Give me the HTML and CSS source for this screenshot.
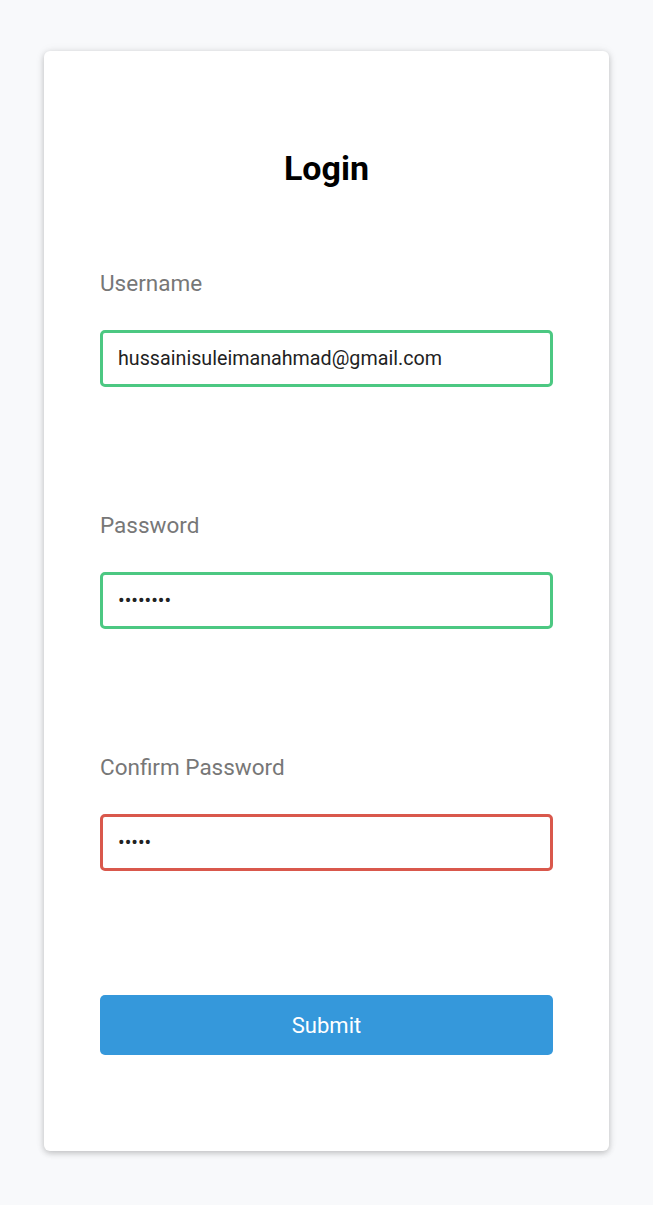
FILE: index.html
```html
<!DOCTYPE html>
<html lang="en">
<head>
<meta charset="utf-8">
<title>Login</title>
<link rel="stylesheet" href="styles.css">
</head>
<body>
<main class="page">
  <form class="card">
    <h1 class="title">Login</h1>
    <div class="field">
      <label class="label" for="u">Username</label>
      <input class="input valid" id="u" type="text" value="hussainisuleimanahmad@gmail.com">
    </div>
    <div class="field">
      <label class="label" for="p">Password</label>
      <input class="input valid" id="p" type="password" value="12345678">
    </div>
    <div class="field">
      <label class="label" for="c">Confirm Password</label>
      <input class="input invalid" id="c" type="password" value="12345">
    </div>
    <button class="submit" type="button">Submit</button>
  </form>
</main>
</body>
</html>
```
FILE: styles.css
```css
html, body {
  margin: 0;
  padding: 0;
  background: #f8f9fb;
  font-family: Roboto, "Liberation Sans", sans-serif;
}
.page {
  padding: 51px 44px 54px 44px;
}
.card {
  background: #fff;
  border-radius: 6px;
  box-shadow: 0 2px 6px rgba(0, 0, 0, 0.22), 0 0 12px rgba(0, 0, 0, 0.05);
  padding: 97px 56px 96px 56px;
  display: flex;
  flex-direction: column;
  height: 1100px;
  box-sizing: border-box;
}
.title {
  margin: 0 0 83px 0;
  text-align: center;
  font-size: 34px;
  line-height: 40px;
  font-weight: 700;
  color: #000;
}
.field {
  display: flex;
  flex-direction: column;
  margin-bottom: 126px;
}
.field:nth-of-type(3) {
  margin-bottom: 124px;
}
.label {
  font-size: 22.5px;
  line-height: 24px;
  color: #777;
  margin-bottom: 35px;
}
.input {
  box-sizing: border-box;
  height: 57px;
  width: 100%;
  border: 3px solid #4cc882;
  border-radius: 5px;
  padding: 0 15px;
  font-family: Roboto, "Liberation Sans", sans-serif;
  font-size: 19.7px;
  color: #222;
  outline: none;
  background: #fff;
}
.input.invalid {
  border-color: #d9584c;
}
.submit {
  height: 60px;
  width: 100%;
  border: none;
  border-radius: 5px;
  background: #3598db;
  color: #fff;
  font-family: Roboto, "Liberation Sans", sans-serif;
  font-size: 22px;
}
```
